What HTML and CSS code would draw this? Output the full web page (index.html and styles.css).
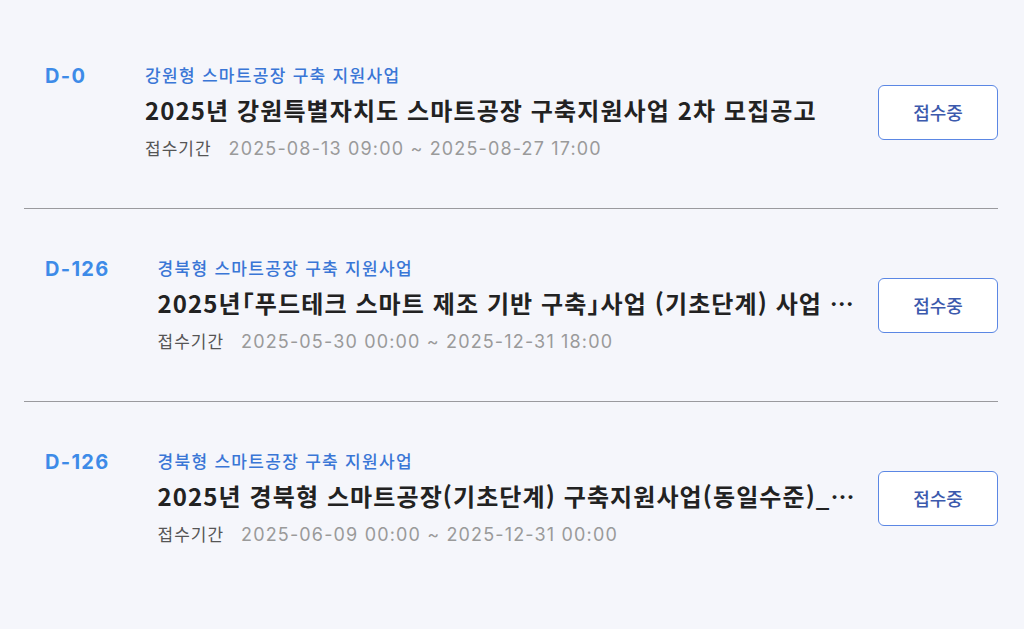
FILE: index.html
```html
<!DOCTYPE html>
<html lang="ko">
<head>
<meta charset="utf-8">
<link rel="stylesheet" href="styles.css">
</head>
<body>
<div class="list">
  <div class="row">
    <div class="main">
      <div class="dday">D-0</div>
      <div class="info">
        <div class="cat">강원형 스마트공장 구축 지원사업</div>
        <div class="title">2025년 강원특별자치도 스마트공장 구축지원사업 2차 모집공고</div>
        <div class="period"><span class="label">접수기간</span><span class="dates">2025-08-13 09:00 ~ 2025-08-27 17:00</span></div>
      </div>
    </div>
    <div class="btn">접수중</div>
  </div>
  <div class="row">
    <div class="main">
      <div class="dday">D-126</div>
      <div class="info">
        <div class="cat">경북형 스마트공장 구축 지원사업</div>
        <div class="title">2025년<span class="punct">「</span>푸드테크 스마트 제조 기반 구축<span class="punct">」</span>사업 (기초단계) 사업 참여기업 모집 공고</div>
        <div class="period"><span class="label">접수기간</span><span class="dates">2025-05-30 00:00 ~ 2025-12-31 18:00</span></div>
      </div>
    </div>
    <div class="btn">접수중</div>
  </div>
  <div class="row">
    <div class="main">
      <div class="dday">D-126</div>
      <div class="info">
        <div class="cat">경북형 스마트공장 구축 지원사업</div>
        <div class="title">2025년 경북형 스마트공장(기초단계) 구축지원사업(동일수준)_(2차) 모집공고</div>
        <div class="period"><span class="label">접수기간</span><span class="dates">2025-06-09 00:00 ~ 2025-12-31 00:00</span></div>
      </div>
    </div>
    <div class="btn">접수중</div>
  </div>
</div>
</body>
</html>
```

FILE: styles.css
```css
html, body {
  margin: 0;
  padding: 0;
  background: #f5f6fb;
}
body {
  font-family: "Noto Sans CJK KR", "Noto Sans", sans-serif;
  width: 1024px;
  height: 629px;
  overflow: hidden;
}
.list {
  padding: 16px 26px 0 24px;
}
.row {
  display: flex;
  align-items: center;
  height: 192px;
  border-bottom: 1px solid #9a9a9e;
  gap: 14px;
}
.row:last-child {
  border-bottom: none;
}
.main {
  flex: 1;
  min-width: 0;
  display: flex;
  align-items: flex-start;
  gap: 48px;
  padding-left: 21px;
}
.dday {
  min-width: 52px;
  font-family: "Inter", "Noto Sans CJK KR", sans-serif;
  font-weight: 700;
  font-size: 20px;
  letter-spacing: 1.3px;
  line-height: 24px;
  color: #3d8be8;
  flex-shrink: 0;
}
.info {
  flex: 1;
  min-width: 0;
}
.cat {
  font-size: 17px;
  letter-spacing: 1.3px;
  line-height: 22px;
  color: #3a76d6;
  font-weight: 500;
}
.title {
  margin-top: 8px;
  font-size: 24px;
  letter-spacing: 1.1px;
  line-height: 32px;
  font-weight: 700;
  color: #222;
  white-space: nowrap;
  overflow: hidden;
  text-overflow: ellipsis;
}
.punct {
  font-feature-settings: "halt";
}
.period {
  margin-top: 10px;
  font-size: 17px;
  line-height: 24px;
}
.label {
  color: #555;
  letter-spacing: 1px;
  margin-right: 17px;
}
.dates {
  color: #9a9a9a;
  font-size: 18px;
  letter-spacing: 1.15px;
  font-family: "Inter", "Noto Sans CJK KR", sans-serif;
}
.btn {
  flex-shrink: 0;
  width: 118px;
  height: 53px;
  border: 1px solid #5b87e4;
  border-radius: 6px;
  background: #fff;
  display: flex;
  align-items: center;
  justify-content: center;
  font-size: 18px;
  font-weight: 500;
  color: #3c5aad;
}
```
